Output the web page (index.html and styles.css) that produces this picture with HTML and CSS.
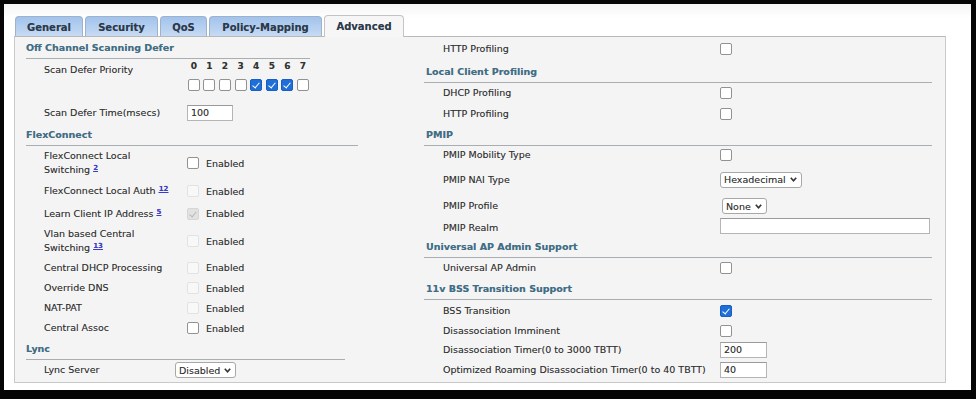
FILE: index.html
```html
<!DOCTYPE html>
<html>
<head>
<meta charset="utf-8">
<link rel="stylesheet" href="styles.css">
</head>
<body>
<div class="frame">
  <div class="tabs">
    <div class="tab t-general">General</div>
    <div class="tab t-security">Security</div>
    <div class="tab t-qos">QoS</div>
    <div class="tab t-policy">Policy-Mapping</div>
    <div class="tab t-adv active">Advanced</div>
  </div>
  <div class="panel">
    <div class="col left">
      <div class="sec w284">Off Channel Scanning Defer</div>
      <div class="row prio">
        <div class="lbl">Scan Defer Priority</div>
        <div class="prio-grid">
          <span>0</span><span>1</span><span>2</span><span>3</span><span>4</span><span>5</span><span>6</span><span>7</span>
          <i class="cb"></i><i class="cb"></i><i class="cb"></i><i class="cb"></i><i class="cb on"></i><i class="cb on"></i><i class="cb on"></i><i class="cb"></i>
        </div>
      </div>
      <div class="row h23">
        <div class="lbl">Scan Defer Time(msecs)</div>
        <div class="inp w46">100</div>
      </div>
      <div class="sec w332">FlexConnect</div>
      <div class="row h34">
        <div class="lbl"><span>FlexConnect Local</span><br><span>Switching</span> <a class="sup">2</a></div>
        <i class="cb"></i><span class="en">Enabled</span>
      </div>
      <div class="row h22">
        <div class="lbl">FlexConnect Local Auth <a class="sup">12</a></div>
        <i class="cb dis"></i><span class="en">Enabled</span>
      </div>
      <div class="row h23">
        <div class="lbl">Learn Client IP Address <a class="sup">5</a></div>
        <i class="cb dis on"></i><span class="en">Enabled</span>
      </div>
      <div class="row h32">
        <div class="lbl"><span>Vlan based Central</span><br><span>Switching</span> <a class="sup">13</a></div>
        <i class="cb dis"></i><span class="en">Enabled</span>
      </div>
      <div class="row h21">
        <div class="lbl">Central DHCP Processing</div>
        <i class="cb dis"></i><span class="en">Enabled</span>
      </div>
      <div class="row">
        <div class="lbl">Override DNS</div>
        <i class="cb dis"></i><span class="en">Enabled</span>
      </div>
      <div class="row">
        <div class="lbl">NAT-PAT</div>
        <i class="cb dis"></i><span class="en">Enabled</span>
      </div>
      <div class="row">
        <div class="lbl">Central Assoc</div>
        <i class="cb"></i><span class="en">Enabled</span>
      </div>
      <div class="sec w319">Lync</div>
      <div class="row">
        <div class="lbl lync">Lync Server</div>
        <div class="sel">Disabled<svg width="7" height="5" viewBox="0 0 7 5"><polyline points="0.8,0.8 3.5,3.8 6.2,0.8" fill="none" stroke="#333" stroke-width="1.6"/></svg></div>
      </div>
    </div>
    <div class="col right">
      <div class="row h24">
        <div class="lbl">HTTP Profiling</div>
        <i class="cb"></i>
      </div>
      <div class="sec">Local Client Profiling</div>
      <div class="row">
        <div class="lbl">DHCP Profiling</div>
        <i class="cb"></i>
      </div>
      <div class="row h21">
        <div class="lbl">HTTP Profiling</div>
        <i class="cb"></i>
      </div>
      <div class="sec">PMIP</div>
      <div class="row h17">
        <div class="lbl">PMIP Mobility Type</div>
        <i class="cb"></i>
      </div>
      <div class="row h33">
        <div class="lbl">PMIP NAI Type</div>
        <div class="sel">Hexadecimal<svg width="7" height="5" viewBox="0 0 7 5"><polyline points="0.8,0.8 3.5,3.8 6.2,0.8" fill="none" stroke="#333" stroke-width="1.6"/></svg></div>
      </div>
      <div class="row">
        <div class="lbl">PMIP Profile</div>
        <div class="sel shift">None<svg width="7" height="5" viewBox="0 0 7 5"><polyline points="0.8,0.8 3.5,3.8 6.2,0.8" fill="none" stroke="#333" stroke-width="1.6"/></svg></div>
      </div>
      <div class="row">
        <div class="lbl low">PMIP Realm</div>
        <div class="inp w210"></div>
      </div>
      <div class="sec">Universal AP Admin Support</div>
      <div class="row">
        <div class="lbl">Universal AP Admin</div>
        <i class="cb"></i>
      </div>
      <div class="sec">11v BSS Transition Support</div>
      <div class="row h21">
        <div class="lbl">BSS Transition</div>
        <i class="cb on"></i>
      </div>
      <div class="row h19">
        <div class="lbl">Disassociation Imminent</div>
        <i class="cb"></i>
      </div>
      <div class="row">
        <div class="lbl">Disassociation Timer(0 to 3000 TBTT)</div>
        <div class="inp w47">200</div>
      </div>
      <div class="row">
        <div class="lbl">Optimized Roaming Disassociation Timer(0 to 40 TBTT)</div>
        <div class="inp w47">40</div>
      </div>
    </div>
  </div>
</div>
</body>
</html>
```
FILE: styles.css
```css
html, body {
  margin: 0;
  padding: 0;
  background: #050505;
  height: 100%;
}
body {
  font-family: "DejaVu Sans", Verdana, sans-serif;
  font-size: 9.5px;
  color: #333;
  text-shadow: 0 0 0.6px rgba(0, 0, 0, 0.35);
}
.frame {
  margin: 4px 5px 0 4px;
  height: 386px;
  background: linear-gradient(#f4f4f4, #fff 14px);
  padding: 12px 25px 0 10px;
  box-sizing: border-box;
}
.tabs {
  display: flex;
  align-items: flex-end;
  gap: 2px;
  height: 20px;
  padding-left: 1px;
}
.tab {
  box-sizing: border-box;
  height: 20px;
  border: 1px solid #9db3cc;
  border-bottom: none;
  border-radius: 4px 4px 0 0;
  background: linear-gradient(#a2c3ec, #c6daf3);
  font-weight: bold;
  font-size: 10px;
  color: #2b3a4c;
  display: flex;
  align-items: center;
  justify-content: center;
  padding-top: 2px;
}
.t-general { width: 68px; }
.t-security { width: 73px; }
.t-qos { width: 47px; }
.t-policy { width: 113px; }
.t-adv { width: 80px; }
.tab.active {
  background: #f6f6f6;
  border-color: #c4c4c4;
  height: 22px;
  padding-top: 0;
  margin-bottom: -1px;
  position: relative;
  z-index: 1;
}
.panel {
  display: flex;
  height: 347px;
  box-sizing: border-box;
  background: #f4f4f4;
  border: 1px solid #c9c9c9;
  border-top-color: #b9b9b9;
}
.col {
  display: flex;
  flex-direction: column;
}
.left {
  width: 409px;
  padding-left: 11px;
  box-sizing: border-box;
}
.sec {
  box-sizing: content-box;
  height: 21px;
  line-height: 21px;
  border-bottom: 1px solid #a9aeb3;
  font-weight: bold;
  color: #3e6f89;
  flex: none;
}
.right .sec { width: 506px; padding-left: 2px; }
.w284 { width: 284px; }
.w332 { width: 332px; }
.w319 { width: 319px; }
.row {
  display: flex;
  align-items: center;
  height: 20px;
  flex: none;
}
.h17 { height: 17px; }
.h19 { height: 19px; }
.h21 { height: 21px; }
.h22 { height: 22px; }
.h23 { height: 23px; }
.h24 { height: 24px; }
.h32 { height: 32px; }
.h33 { height: 33px; }
.h34 { height: 34px; }
.lbl {
  flex: none;
  line-height: 14px;
}
.left .lbl {
  width: 143px;
  padding-left: 18px;
}
.left .lbl.lync { width: 131px; }
.right .lbl {
  width: 277px;
  padding-left: 19px;
}
.right .lbl.low { padding-top: 4px; }
.sup {
  display: inline-block;
  line-height: 7px;
  color: #3a3ad0;
  text-decoration: underline;
  font-weight: bold;
  font-size: 7px;
  vertical-align: 3px;
}
.prio {
  height: 42px;
  align-items: flex-start;
}
.prio .lbl { padding-top: 4px; }
.prio-grid {
  display: grid;
  grid-template-columns: repeat(8, 15.6px);
  row-gap: 7px;
  margin-top: 1px;
  margin-left: -1px;
  justify-items: center;
}
.prio-grid span {
  font-weight: bold;
  font-size: 9px;
  line-height: 12px;
  color: #333;
}
.cb {
  display: inline-block;
  width: 10px;
  height: 10px;
  border: 1px solid #929292;
  border-radius: 2px;
  background: #fff;
  flex: none;
  box-sizing: content-box;
  position: relative;
}
.cb.on {
  background: #1f6fd8;
  border-color: #1a5fbf;
}
.cb.on::after {
  content: "";
  position: absolute;
  left: 3px;
  top: 1px;
  width: 3px;
  height: 6px;
  border: solid #fff;
  border-width: 0 1.5px 1.5px 0;
  transform: rotate(40deg);
}
.cb.dis {
  border-color: #e2e2e2;
  background: #f8f8f8;
}
.cb.dis.on { background: #e2e2e2; border-color: #d6d6d6; }
.cb.dis.on::after { border-color: #b8b8b8; }
.en {
  margin-left: 7px;
}
.inp {
  box-sizing: border-box;
  height: 16px;
  line-height: 14px;
  background: #fff;
  border: 1px solid #b5b5b5;
  border-top-color: #9a9a9a;
  padding-left: 3px;
  color: #333;
}
.w46 { width: 46px; }
.w47 { width: 47px; }
.w210 { width: 210px; }
.sel {
  box-sizing: border-box;
  height: 16px;
  display: flex;
  align-items: center;
  gap: 4px;
  padding: 0 4px 0 3px;
  background: #fff;
  border: 1px solid #a8a8a8;
  border-radius: 3px;
  color: #333;
}
.sel.shift { margin-left: 2px; }
```
